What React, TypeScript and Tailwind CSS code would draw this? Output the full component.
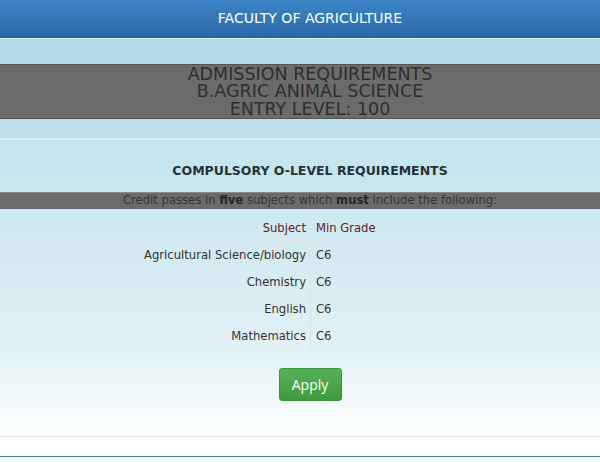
const rows = [
  { subject: 'Agricultural Science/biology', grade: 'C6' },
  { subject: 'Chemistry', grade: 'C6' },
  { subject: 'English', grade: 'C6' },
  { subject: 'Mathematics', grade: 'C6' },
];

export default function App() {
  return (
    <div className="h-[462px] w-[600px] overflow-hidden bg-white font-['DejaVu_Sans',sans-serif]">
      <div className="w-[620px]">
        <header className="flex h-[38px] items-center justify-center border-b border-[#245d96] bg-gradient-to-b from-[#3c84c6] to-[#2b6aa9] text-[14px] text-white">
          FACULTY OF AGRICULTURE
        </header>
        <div className="h-px bg-[#e4f2f8]" />
        <div className="h-[25px] bg-[#b1dae8]" />
        <div className="flex h-[55px] flex-col items-center justify-center border-y border-[#555] bg-[#6b6b6b] pt-px text-[17.5px] leading-[17.5px] text-[#2e2e2e]">
          <div>ADMISSION REQUIREMENTS</div>
          <div>B.AGRIC ANIMAL SCIENCE</div>
          <div>ENTRY LEVEL: 100</div>
        </div>
        <div className="h-[19px] bg-[#bde0ea]" />
        <div className="h-[2px] bg-[#dcedf4]" />

        <section className="bg-gradient-to-b from-[#c3e3ed] via-[#e2f1f6] via-70% to-white">
          <h2 className="flex h-[52px] items-end justify-center pb-[11px] text-[12.5px] font-bold text-[#263238]">
            COMPULSORY O-LEVEL REQUIREMENTS
          </h2>
          <div className="flex h-[17px] items-center justify-center border-t border-[#8a8a8a] bg-[#6b6b6b] text-[11.6px] text-[#353535]">
            Credit passes in&nbsp;<b className="text-[#262626]">five</b>&nbsp;subjects which&nbsp;
            <b className="text-[#262626]">must</b>&nbsp;include the following:
          </div>

          <div className="mt-[6px] text-[11.6px]">
            <div className="flex h-[28px] border-b border-[#dbe9ef]">
              <div className="flex w-[311px] items-center justify-end border-r border-[#d3e4ea] pr-[4px] text-[#5a1f1f]">
                Subject
              </div>
              <div className="flex items-center pl-[5px] text-[#5a1f1f]">Min Grade</div>
            </div>
            {rows.map((r) => (
              <div key={r.subject} className="flex h-[27px] border-b border-[#dbe9ef]">
                <div className="flex w-[311px] items-center justify-end border-r border-[#d3e4ea] pr-[4px] text-[#333]">
                  {r.subject}
                </div>
                <div className="flex items-center pl-[5px] text-[#333]">{r.grade}</div>
              </div>
            ))}
          </div>

          <div className="flex justify-center pt-[17px] pb-[35px]">
            <button className="h-[33px] w-[63px] rounded-[3px] border border-[#3a913a] bg-gradient-to-b from-[#58b158] to-[#3f9a3f] font-['Open_Sans',sans-serif] text-[14px] text-white">
              Apply
            </button>
          </div>
        </section>
        <div className="h-[20px] border-t border-[#e2e2e2]" />
        <div className="h-px bg-[#4b8090]" />
        <div className="h-[10px] bg-[#f2f9f9]" />
      </div>
    </div>
  );
}
